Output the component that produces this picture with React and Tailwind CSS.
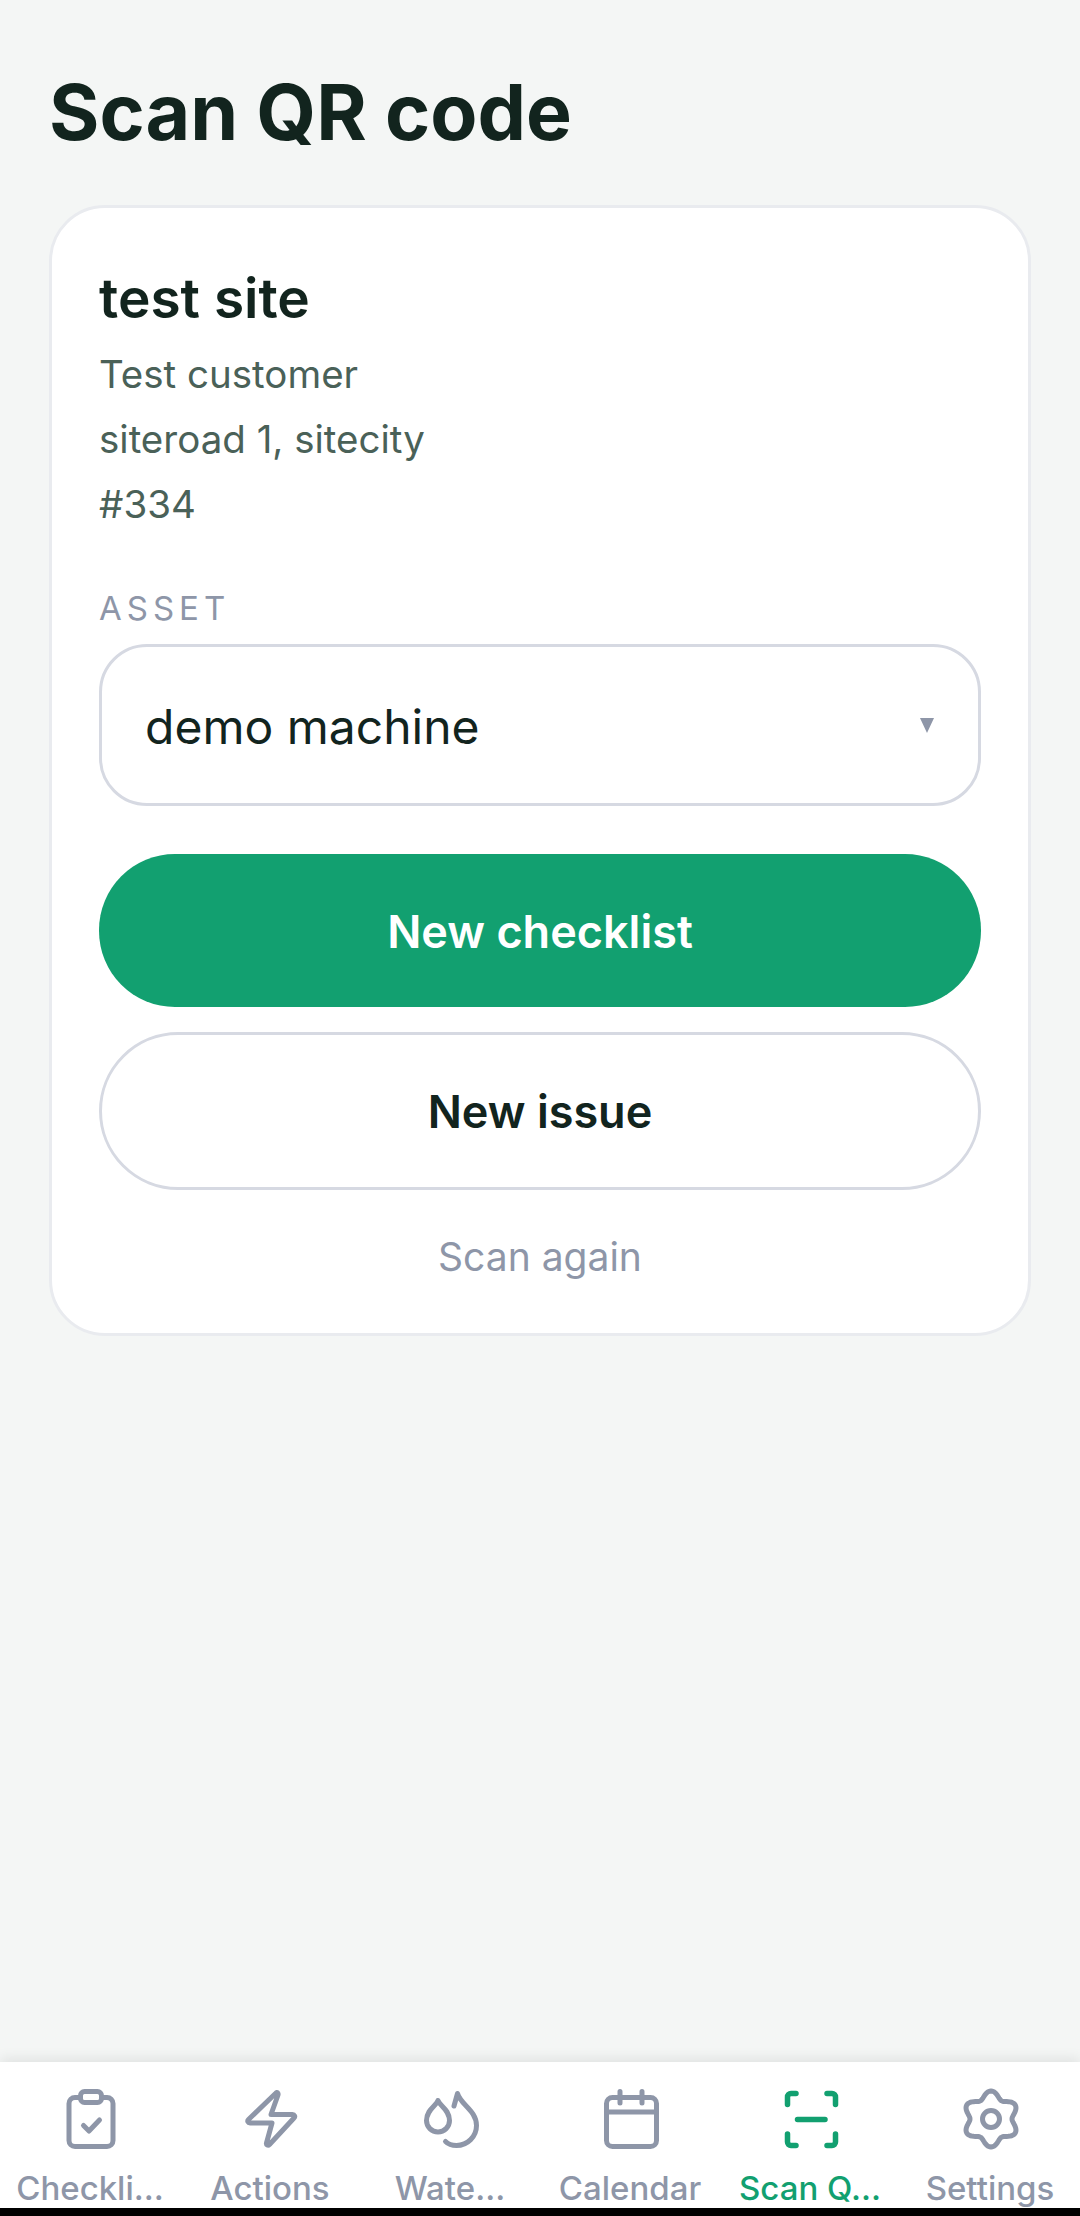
import React from 'react';

const sans = { fontFamily: 'Inter, "Liberation Sans", sans-serif' };

// six lobed cog outline, r wobbles between waist and lobe
const gearPath = Array.from({ length: 120 }, (_, i) => {
    const a = (i / 120) * Math.PI * 2;
    const r = 24.5 + 3.5 * Math.cos(6 * (a + Math.PI / 2));
    return `${i === 0 ? 'M' : 'L'}${(31 + r * Math.cos(a)).toFixed(2)} ${(31 + r * Math.sin(a)).toFixed(2)}`;
}).join(' ') + 'z';

const iconClass = 'h-[60px] w-[60px] overflow-visible';

const ClipboardIcon = () => (
    <svg viewBox="0 0 60 60" className={iconClass} fill="none" stroke="currentColor" strokeWidth="5" strokeLinecap="round" strokeLinejoin="round">
        <path d="M20.5 9.5H15a6 6 0 0 0-6 6V52.5a6 6 0 0 0 6 6H47a6 6 0 0 0 6-6V15.5a6 6 0 0 0-6-6H41.5" />
        <rect x="20.5" y="3.5" width="21" height="11" rx="4" />
        <path d="M23.5 37.5l5.5 5.5 10.5-11" />
    </svg>
);

const BoltIcon = () => (
    <svg viewBox="0 0 60 60" className={iconClass} fill="none" stroke="currentColor" strokeWidth="5" strokeLinecap="round" strokeLinejoin="round">
        <path d="M36 5L8.5 31.5c-1.5 1.5-.5 3.5 1.5 3.5H32L26.5 55c-.5 2 1.5 3 3 1.5L54 30c1.5-1.5.5-3.5-1.5-3.5H31L38 7c.5-2-1-3.5-2-2z" />
    </svg>
);

const DropsIcon = () => (
    <svg viewBox="0 0 60 60" className={iconClass} fill="none" stroke="currentColor" strokeWidth="5" strokeLinecap="round" strokeLinejoin="round">
        <path d="M18 12.5c-1.5 5-11.5 9-11.5 20a11.5 11.5 0 0 0 23 0c0-11-10-15-11.5-20z" />
        <path d="M34 18L37.5 5.5c3 11 19 17 19 32a20 20 0 0 1-20 20c-4.5 0-8.5-1.5-11-4" />
    </svg>
);

const CalendarIcon = () => (
    <svg viewBox="0 0 60 60" className={iconClass} fill="none" stroke="currentColor" strokeWidth="5" strokeLinecap="round" strokeLinejoin="round">
        <rect x="6.5" y="9.5" width="50" height="49" rx="6" />
        <path d="M6.5 24h50M20 3.5V15M42 3.5V15" />
    </svg>
);

const ScanIcon = () => (
    <svg viewBox="0 0 60 60" className={iconClass} fill="none" stroke="currentColor" strokeWidth="5.5" strokeLinecap="round" strokeLinejoin="round">
        <path d="M16 5.5H11A3.5 3.5 0 0 0 7.5 9v7.5M47 5.5h5A3.5 3.5 0 0 1 55.5 9v7.5M7.5 46v8A3.5 3.5 0 0 0 11 57.5h5M55.5 46v8a3.5 3.5 0 0 1-3.5 3.5h-5M17.5 31.5H45" />
    </svg>
);

const GearIcon = () => (
    <svg viewBox="0 0 60 60" className={iconClass} fill="none" stroke="currentColor" strokeWidth="5" strokeLinecap="round" strokeLinejoin="round">
        <path d={gearPath} />
        <circle cx="31" cy="31" r="8.5" />
    </svg>
);

const tabs = [
    { label: 'Checkli…', icon: ClipboardIcon },
    { label: 'Actions', icon: BoltIcon },
    { label: 'Wate…', icon: DropsIcon },
    { label: 'Calendar', icon: CalendarIcon },
    { label: 'Scan Q…', icon: ScanIcon, active: true },
    { label: 'Settings', icon: GearIcon },
];

export default function App() {
    return (
        <div style={sans} className="flex h-[2216px] w-[1080px] flex-col overflow-hidden bg-[#f4f6f5] text-[#12241e]">
            <main className="flex-1 px-[49px] pt-[68px]">
                <h1 className="text-[77px] font-bold leading-[88px]">Scan QR code</h1>
                <section className="mt-[49px] rounded-[56px] border-[3px] border-[#e9ebef] bg-white px-[47px] pt-[58px] pb-[52px]">
                    <h2 className="text-[55px] font-semibold leading-[64px]">test site</h2>
                    <div className="mt-[12px] text-[38.5px] leading-[65px] text-[#4a6158]">
                        <p>Test customer</p>
                        <p>siteroad 1, sitecity</p>
                        <p>#334</p>
                    </div>
                    <div className="mt-[51px] text-[33px] leading-[40px] tracking-[5px] text-[#8e96a8]">ASSET</div>
                    <div className="mt-[16px] flex h-[162px] items-center justify-between rounded-[48px] border-[3px] border-[#d6d9e2] pl-[43px] pr-[44px]">
                        <span className="relative top-[2px] text-[48px]">demo machine</span>
                        <span className="h-0 w-0 border-x-[7px] border-t-[15px] border-x-transparent border-t-[#8e96a8]" />
                    </div>
                    <button type="button" className="mt-[48px] block h-[153px] w-full rounded-[76px] bg-[#12a070] pt-[2px] text-[45px] font-semibold text-white">New checklist</button>
                    <button type="button" className="mt-[25px] block h-[158px] w-full rounded-[79px] border-[3px] border-[#d6d9e2] bg-white pt-[2px] text-[45px] font-semibold">New issue</button>
                    <div className="mt-[43px] text-center text-[39px] leading-[48px] text-[#8e96a8]">Scan again</div>
                </section>
            </main>
            <nav className="relative flex h-[146px] shrink-0 bg-white shadow-[0_-4px_12px_rgba(0,0,0,0.08)]">
                {tabs.map((tab) => {
                    const Icon = tab.icon;
                    return (
                        <div key={tab.label} className={`flex flex-1 flex-col items-center pt-[26px] ${tab.active ? 'text-[#12a070]' : 'text-[#8e96a8]'}`}>
                            <Icon />
                            <span className="mt-[19px] whitespace-nowrap text-[33px] font-medium leading-[42px]">{tab.label}</span>
                        </div>
                    );
                })}
            </nav>
            <div className="relative h-[8px] shrink-0 bg-black" />
        </div>
    );
}
